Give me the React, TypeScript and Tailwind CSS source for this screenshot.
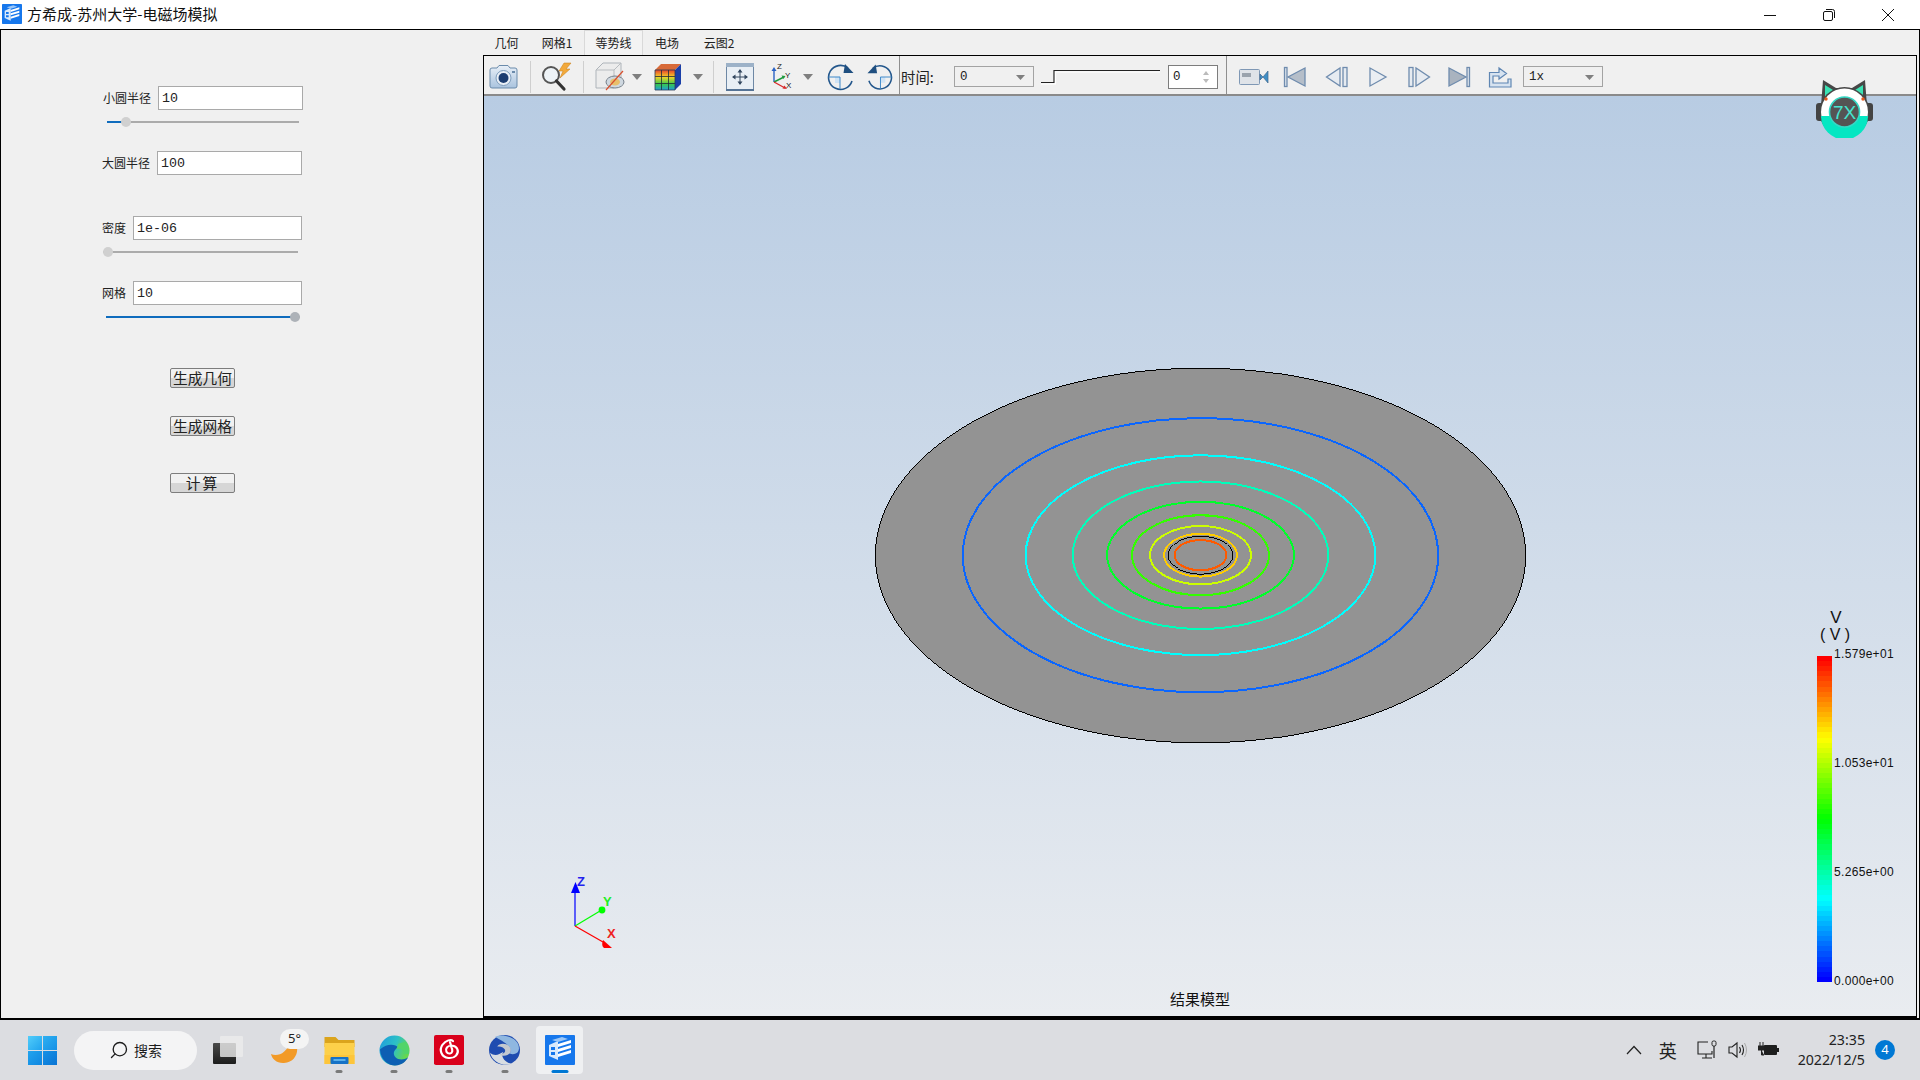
import React from "react";
import { Search } from "lucide-react";

const CJK = "font-['Noto_Sans_CJK_SC','Noto_Sans',sans-serif]";

function AppIcon({ size }: { size: number }) {
  return (
    <svg width={size} height={size} viewBox="0 0 30 30">
      <rect width="30" height="30" fill="#1677ec" rx="1" />
      <path d="M4 10 L13 6 L13 25 L4 21Z" fill="#d9eafc" />
      <path d="M13 9 L26 5 L26 8 L13 12Z M13 14 L26 10 L26 13 L13 17Z M13 19 L26 15 L26 18 L13 22Z" fill="#fff" />
      <path d="M7 5 L17 2 L23 4 L13 7Z" fill="#9cc7f7" />
      <path d="M6 12h4v3H6zM6 17h4v3H6z" fill="#1677ec" />
    </svg>
  );
}

function Arrow() {
  return (
    <svg width="10" height="6" viewBox="0 0 10 6">
      <path d="M0 0H10L5 6Z" fill="#7f7f7f" />
    </svg>
  );
}

function Sep() {
  return <div className="w-px h-[32px] bg-[#cfcfcf]" />;
}

function Field({ label, value, ml, inputW, gap }: { label: string; value: string; ml: number; inputW: string; gap: string }) {
  return (
    <div className="flex items-center h-[24px]" style={{ marginLeft: ml }}>
      <span className={`${CJK} text-[12px] text-[#222] whitespace-nowrap`}>{label}</span>
      <div className={`${inputW} ${gap} h-[24px] bg-white border-[1.5px] border-[#a9a9a9] flex items-center pl-[3px] pt-[1px] font-['Liberation_Mono',monospace] text-[13.3px] text-[#222]`}>{value}</div>
    </div>
  );
}

function Slider({ ml, w, fill, thumb, thumbColor }: { ml: number; w: number; fill: number; thumb: number; thumbColor: string }) {
  return (
    <div className="relative h-[10px] mt-[7px]" style={{ marginLeft: ml, width: w }}>
      <div className="absolute left-0 right-0 top-[4px] h-[2px] bg-[#ababab]" />
      <div className="absolute left-0 top-[4px] h-[2px] bg-[#0f6cbd]" style={{ width: fill }} />
      <div className="absolute top-0 w-[10px] h-[10px] rounded-full" style={{ left: thumb - 5, background: thumbColor }} />
    </div>
  );
}

function Btn({ label, mt, wide }: { label: string; mt: string; wide?: boolean }) {
  return (
    <button className={`${mt} ml-[169px] w-[65px] h-[20px] border border-[#7d7d7d] rounded-[2px] bg-[linear-gradient(#f1f1f1_50%,#d6d6d6_50%)] ${CJK} text-[14.7px] leading-[18px] text-[#222] flex items-center justify-center ${wide ? "" : "tracking-[2px]"}`}>{label}</button>
  );
}

function Tab({ w, label, active }: { w: string; label: string; active?: boolean }) {
  return (
    <div className={`${w} h-[25px] flex items-center justify-center ${CJK} text-[12px] text-[#222] ${active ? "border border-b-0 border-[#d9d9d9] bg-[#f3f3f3]" : ""}`}>{label}</div>
  );
}

function Camera() {
  return (
    <svg width="30" height="26" viewBox="0 0 30 26">
      <defs>
        <linearGradient id="camg" x1="0" y1="0" x2="0" y2="1">
          <stop offset="0" stopColor="#e8eff7" />
          <stop offset="1" stopColor="#a9c3de" />
        </linearGradient>
      </defs>
      <path d="M1 6 Q1 4 3 4 H8 L10 1.5 H19 L21 4 H26 Q28 4 28 6 V22 Q28 24 26 24 H3 Q1 24 1 22Z" fill="url(#camg)" stroke="#6b8bab" />
      <circle cx="14.5" cy="14" r="7.5" fill="#e9eff6" stroke="#7e9dbc" />
      <circle cx="14.5" cy="14" r="5" fill="#1c3d70" />
      <rect x="23" y="7" width="3" height="2" fill="#6b8bab" />
    </svg>
  );
}

function Magnifier() {
  return (
    <svg width="32" height="30" viewBox="0 0 32 30">
      <path d="M23 1 L18 9 L22 9 L19 16 L29 7 L25 7 L30 1Z" fill="#f2a93b" stroke="#c77c15" strokeWidth="0.5" />
      <circle cx="10" cy="13" r="8" fill="#eef3f7" stroke="#555" strokeWidth="2" />
      <path d="M15.5 19 L23 27" stroke="#333" strokeWidth="3.2" strokeLinecap="round" />
    </svg>
  );
}

function CubeHide() {
  return (
    <svg width="32" height="30" viewBox="0 0 32 30">
      <path d="M2 8 L9 1 H27 V18 L20 26 H2Z" fill="#ececec" stroke="#aeb4ba" />
      <path d="M2 8 H20 V26 M20 8 L27 1" fill="none" stroke="#b8bcc0" />
      <ellipse cx="21" cy="20" rx="9" ry="6" fill="#cfd8e0" stroke="#77818c" />
      <ellipse cx="21" cy="20" rx="5" ry="3.5" fill="#e8bf6c" />
      <path d="M12 28 L29 9" stroke="#d8502e" strokeWidth="1.2" />
    </svg>
  );
}

function ColorCube() {
  return (
    <svg width="28" height="28" viewBox="0 0 28 28">
      <defs>
        <linearGradient id="ccg" x1="0" y1="0" x2="0" y2="1">
          <stop offset="0" stopColor="#e8402a" />
          <stop offset="0.35" stopColor="#f4d32a" />
          <stop offset="0.7" stopColor="#37c94a" />
          <stop offset="1" stopColor="#1f9bd8" />
        </linearGradient>
      </defs>
      <path d="M1 7 L7 1 H27 L21 7Z" fill="#d86a38" />
      <path d="M21 7 L27 1 V21 L21 27Z" fill="#1a3fa8" />
      <rect x="1" y="7" width="20" height="20" fill="url(#ccg)" />
      <path d="M7.5 7V27M14.5 7V27M1 13.5H21M1 20.5H21" stroke="#1e2a3a" strokeWidth="0.8" />
      <path d="M1 7H21V27H1Z" fill="none" stroke="#2a3a55" strokeWidth="0.8" />
    </svg>
  );
}

function FitBox() {
  return (
    <svg width="28" height="28" viewBox="0 0 28 28">
      <rect x="0.5" y="0.5" width="27" height="27" fill="#e9eff5" stroke="#6e88a5" />
      <rect x="0" y="0" width="28" height="4" fill="#9db2c8" />
      <rect x="0" y="26" width="28" height="2" fill="#557395" />
      <path d="M14 7 V21 M7 14 H21" stroke="#33475f" strokeWidth="1" />
      <path d="M14 6 L11.5 9.5 H16.5Z M14 22 L11.5 18.5 H16.5Z M6 14 L9.5 11.5 V16.5Z M22 14 L18.5 11.5 V16.5Z" fill="#33475f" />
    </svg>
  );
}

function AxesIcon() {
  return (
    <svg width="24" height="30" viewBox="0 0 24 30">
      <path d="M4 20 V7" stroke="#2a62c4" strokeWidth="1.4" />
      <path d="M4 5 L1.5 9 H6.5Z" fill="#2a62c4" />
      <path d="M4 20 L14 15" stroke="#1e9a3e" strokeWidth="1.4" />
      <path d="M15.5 14 L11.5 13.5 L13.5 17Z" fill="#1e9a3e" />
      <path d="M4 20 L15 26" stroke="#d92b2b" strokeWidth="1.4" />
      <path d="M17 27 L12.5 26.5 L14.5 23.5Z" fill="#d92b2b" />
      <text x="7" y="7" fontSize="8" fontFamily="'Liberation Sans'" fill="#222">Z</text>
      <text x="15" y="16" fontSize="8" fontFamily="'Liberation Sans'" fill="#222">Y</text>
      <text x="16" y="26" fontSize="8" fontFamily="'Liberation Sans'" fill="#222">X</text>
    </svg>
  );
}

function Rotate({ flip }: { flip?: boolean }) {
  return (
    <svg width="27" height="28" viewBox="0 0 27 28" className={flip ? "-scale-x-100" : ""}>
      <path d="M21 5 A12 12 0 1 0 25 18" fill="none" stroke="#23578c" strokeWidth="1.6" />
      <path d="M18 1 L26.5 10 L16.5 10Z" fill="#1f4f80" />
      <path d="M8 14 H13 V20 H8Z" fill="#cfe3f5" />
      <path d="M1.5 14 H13 V26" fill="none" stroke="#3d88c9" strokeWidth="1" />
    </svg>
  );
}

const playFill = "#c3cfdd";
const playStroke = "#6f8cae";

function VideoCam() {
  return (
    <svg width="30" height="18" viewBox="0 0 30 18">
      <rect x="0.5" y="1.5" width="20" height="15" rx="1" fill="#dfe3e8" stroke="#7f98b5" />
      <rect x="3" y="5" width="9" height="4" fill="#9aa3ad" />
      <path d="M21 6 L24 9 L29 3 V15 L24 9 L21 12Z" fill="#3f8fc6" stroke="#44688c" strokeWidth="0.7" />
    </svg>
  );
}

function PlayIcon({ kind }: { kind: "first" | "prev" | "play" | "next" | "last" }) {
  return (
    <svg width="24" height="22" viewBox="0 0 24 22">
      {kind === "first" && (
        <g stroke={playStroke} fill={playFill} strokeWidth="1.3">
          <rect x="1.5" y="1.5" width="2.5" height="19" fill="#dfe6ee" />
          <path d="M22 2 V20 L5 11Z" fill="#b5bec9" />
        </g>
      )}
      {kind === "prev" && (
        <g stroke={playStroke} fill="#e6ebf1" strokeWidth="1.3">
          <path d="M15 2 V20 L1.5 11Z" />
          <rect x="18" y="1.5" width="4" height="19" />
        </g>
      )}
      {kind === "play" && <path d="M4 2 V20 L20 11Z" stroke={playStroke} strokeWidth="1.3" fill="#eaeef3" />}
      {kind === "next" && (
        <g stroke={playStroke} fill="#e6ebf1" strokeWidth="1.3">
          <rect x="2" y="1.5" width="4" height="19" />
          <path d="M9 2 V20 L22.5 11Z" />
        </g>
      )}
      {kind === "last" && (
        <g stroke={playStroke} fill={playFill} strokeWidth="1.3">
          <path d="M2 2 V20 L19 11Z" fill="#a9b3bf" />
          <rect x="20" y="1.5" width="2.5" height="19" fill="#dfe6ee" />
        </g>
      )}
    </svg>
  );
}

function LoopIcon() {
  return (
    <svg width="24" height="22" viewBox="0 0 24 22">
      <path d="M1.5 21 V6.5 H11 V2 L18.5 7.5 L11 13 V10 H5 V17 H20 V13 H23 V21Z" fill="#d7e3f0" stroke="#5f86b3" strokeWidth="1.2" />
    </svg>
  );
}

function Combo({ value, w }: { value: string; w: string }) {
  return (
    <div className={`${w} h-[21px] border border-[#a3a3a3] bg-[#f0f0f0] flex items-center justify-between pl-[5px] pr-[8px] pt-[1px] font-['Liberation_Mono',monospace] text-[12.5px] text-[#222]`}>
      <span>{value}</span>
      <svg width="9" height="5" viewBox="0 0 9 5"><path d="M0 0H9L4.5 5Z" fill="#7f7f7f" /></svg>
    </div>
  );
}

function Cell({ w, children }: { w: string; children: React.ReactNode }) {
  return <div className={`${w} shrink-0 h-full flex items-center justify-center`}>{children}</div>;
}

function Toolbar() {
  return (
    <div className="h-[40px] bg-[#f0f0f0] border-b-2 border-[#8a8a8a] flex items-stretch relative">
      <div className="flex items-center pt-[3px] shrink-0">
        <Cell w="w-[40px]"><Camera /></Cell>
        <Cell w="w-[12px]"><Sep /></Cell>
        <Cell w="w-[42px]"><Magnifier /></Cell>
        <Cell w="w-[10px]"><Sep /></Cell>
        <Cell w="w-[44px]"><CubeHide /></Cell>
        <Cell w="w-[10px]"><Arrow /></Cell>
        <Cell w="w-[51px]"><ColorCube /></Cell>
        <Cell w="w-[10px]"><Arrow /></Cell>
        <Cell w="w-[21px]"><Sep /></Cell>
        <Cell w="w-[32px]"><FitBox /></Cell>
        <Cell w="w-[52px]"><AxesIcon /></Cell>
        <div className="-ml-[5px]"><Cell w="w-[10px]"><Arrow /></Cell></div>
        <Cell w="w-[54px]"><Rotate /></Cell>
        <Cell w="w-[26px]"><Rotate flip /></Cell>
        <div className="w-[6px] shrink-0" />
      </div>
      <div className="w-px bg-[#8f8f8f] shrink-0" />
      <div className="flex items-center pt-[3px] shrink-0">
        <span className={`${CJK} ml-[1px] w-[53px] shrink-0 text-[14.4px] text-[#222]`}>时间:</span>
        <Combo value="0" w="w-[80px]" />
        <svg width="119" height="16" viewBox="0 0 119 16" className="ml-[7px] shrink-0">
          <path d="M0 13.5 H13 V1.5 H119" fill="none" stroke="#222" strokeWidth="1.2" />
          <path d="M0 15 H14.5 V3 H119" fill="none" stroke="#ffffff" strokeWidth="1.2" />
        </svg>
        <div className="ml-[8px] w-[50px] h-[24px] border border-[#7d7d7d] bg-white flex items-center justify-between pl-[4px] pr-[8px] pt-[1px] font-['Liberation_Mono',monospace] text-[12.5px] text-[#222] shrink-0">
          <span>0</span>
          <svg width="6" height="12" viewBox="0 0 6 12"><path d="M0 4 L3 0 L6 4Z M0 8 L6 8 L3 12Z" fill="#bbb" /></svg>
        </div>
        <div className="w-[8px] shrink-0" />
      </div>
      <div className="w-px bg-[#8f8f8f] shrink-0" />
      <div className="flex items-center pt-[3px] shrink-0">
        <div className="w-[8px] shrink-0" />
        <Cell w="w-[38px]"><VideoCam /></Cell>
        <Cell w="w-[44px]"><PlayIcon kind="first" /></Cell>
        <Cell w="w-[40px]"><PlayIcon kind="prev" /></Cell>
        <Cell w="w-[42px]"><PlayIcon kind="play" /></Cell>
        <Cell w="w-[39px]"><PlayIcon kind="next" /></Cell>
        <Cell w="w-[41px]"><PlayIcon kind="last" /></Cell>
        <Cell w="w-[42px]"><LoopIcon /></Cell>
        <div className="ml-[2px]"><Combo value="1x" w="w-[80px]" /></div>
      </div>
    </div>
  );
}

const rings: [number, number, string, number][] = [
  [238, 137.2, "#0a66ff", 2],
  [175, 100, "#00ffff", 2],
  [128, 73.8, "#00ffbb", 2],
  [93.5, 53.4, "#00ff2a", 2],
  [68.5, 40, "#33ff00", 2],
  [50.5, 29.2, "#ccff00", 2],
  [36.5, 21.4, "#ffcc00", 2],
  [32.5, 19, "#000000", 1],
  [26, 15.1, "#ff5a00", 2],
];

function Model() {
  return (
    <svg className="absolute inset-0 w-full h-full" viewBox="484 96 1432 921" shapeRendering="crispEdges">
      <ellipse cx="1200.5" cy="556" rx="325.5" ry="187.5" fill="#939393" stroke="#000" strokeWidth="1" />
      {rings.map(([rx, ry, c, sw], i) => (
        <ellipse key={i} cx="1200.5" cy="555.7" rx={rx} ry={ry} fill="none" stroke={c} strokeWidth={sw} />
      ))}
    </svg>
  );
}

function Axes() {
  return (
    <svg className="absolute left-[76px] top-[774px]" width="60" height="90" viewBox="560 870 60 90">
      <path d="M575 926 V890" stroke="#0000ff" strokeWidth="1.2" />
      <path d="M575.5 882 L571 893 H580Z" fill="#0000ff" />
      <path d="M575 926 L600 911" stroke="#00ff00" strokeWidth="1.2" />
      <circle cx="602" cy="910" r="3.4" fill="#00ff00" />
      <path d="M575 926 L603 942" stroke="#ff0000" strokeWidth="1.2" />
      <path d="M603 940 L612 948 H604 Q601 946 603 940Z" fill="#ff0000" />
      <text x="577" y="886" fontSize="13" fontWeight="700" fontFamily="'Liberation Sans'" fill="#2222ee">Z</text>
      <text x="603" y="906" fontSize="13" fontWeight="700" fontFamily="'Liberation Sans'" fill="#22ee22">Y</text>
      <text x="607" y="938" fontSize="13" fontWeight="700" fontFamily="'Liberation Sans'" fill="#ee2222">X</text>
    </svg>
  );
}

function lerp(a: number[], b: number[], t: number) {
  return a.map((v, i) => Math.round(v + (b[i] - v) * t));
}

const stops = [[255, 0, 0], [255, 255, 0], [0, 255, 0], [0, 255, 255], [0, 0, 255]];
const bands = Array.from({ length: 64 }, (_, i) => {
  const p = (i / 63) * 4;
  const k = Math.min(3, Math.floor(p));
  const c = lerp(stops[k], stops[k + 1], p - k);
  return `rgb(${c[0]},${c[1]},${c[2]})`;
});

function Legend() {
  return (
    <div className="absolute left-[1333px] top-[510px] w-[80px] font-['Liberation_Sans',sans-serif] text-[#111]">
      <div className="relative h-[376px]">
        <div className="absolute left-[9px] top-[3px] w-[20px] text-center text-[17px] leading-[18px]">V</div>
        <div className="absolute left-[-2px] top-[20px] w-[40px] text-center text-[16px] leading-[18px] whitespace-nowrap">( V )</div>
        <div className="absolute left-[0px] top-[50px] w-[15px] h-[326px] flex flex-col">
          {bands.map((c, i) => (
            <div key={i} className="flex-1" style={{ background: c }} />
          ))}
        </div>
        {[["1.579e+01", 42], ["1.053e+01", 151], ["5.265e+00", 260], ["0.000e+00", 369]].map(([t, y]) => (
          <div key={t} className="absolute left-[17px] text-[12px] leading-[12px] tracking-[0.32px] whitespace-nowrap" style={{ top: y as number }}>{t}</div>
        ))}
      </div>
    </div>
  );
}

function CatLogo() {
  return (
    <svg className="absolute left-[1331px] top-[-18px]" width="60" height="60" viewBox="0 0 60 60">
      <path d="M8 2 L21 10 H37 L50 2 L52 28 H6Z" fill="#474747" />
      <path d="M10 7 L18 12 L10 21Z M48 7 L40 12 L48 21Z" fill="#3be3b4" />
      <rect x="1" y="25" width="9" height="18" rx="3" fill="#444" />
      <rect x="49" y="25" width="9" height="18" rx="3" fill="#444" />
      <rect x="7" y="26" width="2" height="15" fill="#e8591e" />
      <rect x="50" y="26" width="2" height="15" fill="#e8591e" />
      <circle cx="29.5" cy="34" r="25" fill="#474747" />
      <circle cx="29.5" cy="34" r="23.5" fill="#ffffff" />
      <path d="M6 38 A23.5 23.5 0 0 0 53 38Z" fill="#05e6c2" />
      <circle cx="29.5" cy="34" r="15" fill="#545454" stroke="#34d8c4" strokeWidth="1.6" />
      <circle cx="11" cy="21" r="1.7" fill="#e8591e" />
      <circle cx="48" cy="21" r="1.7" fill="#e8591e" />
      <text x="29.5" y="41" textAnchor="middle" fontSize="19" fontFamily="'Liberation Sans'" fill="#47e5d0">7X</text>
    </svg>
  );
}

function WinLogo() {
  return (
    <div className="grid grid-cols-2 gap-[1px] w-[29px] h-[29px]">
      <div className="bg-[linear-gradient(135deg,#52cdfa,#1fa3ee)]" />
      <div className="bg-[linear-gradient(135deg,#2eb0f1,#1590e6)]" />
      <div className="bg-[linear-gradient(135deg,#22a4ee,#0f86e0)]" />
      <div className="bg-[linear-gradient(135deg,#1591e6,#0a74d4)]" />
    </div>
  );
}

function TaskCell({ w, children, dot }: { w: string; children: React.ReactNode; dot?: boolean }) {
  return (
    <div className={`${w} shrink-0 h-full flex items-center justify-center relative`}>
      {children}
      {dot && <div className="absolute left-1/2 -translate-x-1/2 top-[50px] w-[7px] h-[3px] rounded-full bg-[#7a7a7a]" />}
    </div>
  );
}

function Taskbar() {
  return (
    <div className="h-[60px] bg-[#dcdde1] flex items-stretch relative pl-[22px]">
      <TaskCell w="w-[40px]"><WinLogo /></TaskCell>
      <div className="self-center ml-[12px] w-[123px] h-[39px] rounded-full bg-[#f4f4f5] flex items-center justify-center gap-[5px] shrink-0">
        <Search size={20} strokeWidth={1.6} className="-scale-x-100 text-[#1c1c1c]" />
        <span className={`${CJK} text-[14px] text-[#1c1c1c]`}>搜索</span>
      </div>
      <TaskCell w="w-[62px]">
        <div className="relative w-[30px] h-[28px]">
          <div className="absolute left-0 bottom-0 w-[23px] h-[21px] bg-[linear-gradient(#4a4a4a,#1c1c1c)] rounded-[1px]" />
          <div className="absolute right-0 top-0 w-[23px] h-[21px] bg-[#ececec]/80 rounded-[1px]" />
        </div>
      </TaskCell>
      <TaskCell w="w-[52px]">
        <svg width="27" height="24" viewBox="0 0 27 24" className="absolute left-[12px] top-[20px]">
          <path d="M0 14 C6 17 16 14 20 0 C30 3 28 22 13 23 C6 23.5 1 19 0 14Z" fill="#f29a27" />
        </svg>
        <div className="absolute left-[21px] top-[9px] w-[29px] h-[20px] rounded-full bg-[#f4f4f4] flex items-center justify-center font-['Noto_Sans',sans-serif] text-[13px] text-[#222]">5°</div>
      </TaskCell>
      <TaskCell w="w-[56px]" dot>
        <svg width="31" height="27" viewBox="0 0 30 27">
          <path d="M0 0 H11 L14 3 H30 V10 H0Z" fill="#dba41d" />
          <rect x="0" y="6" width="30" height="21" fill="#fdd04a" />
          <rect x="0" y="18" width="30" height="9" fill="#fdc53b" />
          <rect x="6" y="20" width="18" height="7" rx="1" fill="#1672c6" />
          <rect x="9" y="22" width="12" height="2" fill="#5bb0ea" />
        </svg>
      </TaskCell>
      <TaskCell w="w-[54px]" dot>
        <svg width="31" height="31" viewBox="0 0 32 32">
          <defs>
            <linearGradient id="edge1" x1="0" y1="0" x2="1" y2="0.4">
              <stop offset="0" stopColor="#1e9adf" />
              <stop offset="0.55" stopColor="#2cc0c7" />
              <stop offset="1" stopColor="#67d84c" />
            </linearGradient>
          </defs>
          <circle cx="16" cy="16" r="15.5" fill="url(#edge1)" />
          <path d="M1 15 C2 28 12 32 17 31.5 C24 31 28 27 30 23 C26 26 20 26 17 23 C14 20 15 15 20 13 C18 10 12 9 7 11 C4 12 2 14 1 15Z" fill="#0d5fb3" />
          <path d="M18 14.5 C23 13 26 16 25.5 19.5 L31 19.5 C31.5 16 30.5 10 27 7 L20 9Z" fill="#52d46a" />
        </svg>
      </TaskCell>
      <TaskCell w="w-[56px]" dot>
        <svg width="30" height="30" viewBox="0 0 30 34" preserveAspectRatio="none">
          <rect width="30" height="34" rx="2" fill="#d9001b" />
          <path d="M19 7 C17 4.5 12 6 8.5 11 C5 16.5 7 25 14.5 26 C21 26.8 25 21 23.5 16.5 C22 12 16 10.5 13 14 C10.5 17.5 13 21.5 16 21 C18.5 20.5 19 17.5 17.5 14 L16 8" fill="none" stroke="#fff" strokeWidth="2.2" strokeLinecap="round" />
        </svg>
      </TaskCell>
      <TaskCell w="w-[55px]" dot>
        <svg width="31" height="30" viewBox="0 0 30 34" preserveAspectRatio="none">
          <ellipse cx="15" cy="17" rx="15" ry="17" fill="#1f4cb0" />
          <path d="M6 2 C14 -2 29 3 29 15 C29 21 24 23 20 21 C24 13 14 8 6 2Z" fill="#8fb7e0" />
          <path d="M1 20 C3 30 13 36 22 33 C14 30 11 23 14 19 C9 23 5 24 1 20Z" fill="#d8dde2" />
          <path d="M8 13 C10 8 20 9 21 16 C22 22 15 26 10 22 C14 22 17 19 15 16 C13 13 10 13 8 13Z" fill="#c3c8cf" />
        </svg>
      </TaskCell>
      <div className="ml-[4px] self-center w-[47px] h-[48px] bg-[#eff0f2] rounded-[4px] flex items-center justify-center relative shrink-0">
        <AppIcon size={30} />
        <div className="absolute left-1/2 -translate-x-1/2 bottom-[1px] w-[17px] h-[3px] rounded-full bg-[#0078d4]" />
      </div>
      <div className="ml-auto flex items-center h-full pr-[25px]">
        <svg width="16" height="10" viewBox="0 0 16 10" className="mr-[17px]"><path d="M1 9 L8 1.5 L15 9" fill="none" stroke="#222" strokeWidth="1.2" /></svg>
        <span className={`${CJK} text-[18px] text-[#222] w-[20px] mr-[18px]`}>英</span>
        <svg width="20" height="20" viewBox="0 0 20 20" className="mr-[11px]">
          <path d="M11 2 H1 V14 H15 V11 M5 18 H15 M9 14 V18" fill="none" stroke="#222" strokeWidth="1.1" />
          <rect x="15" y="1" width="4" height="5" rx="1.5" fill="none" stroke="#222" />
          <path d="M17 6 V18" stroke="#222" strokeWidth="1.2" />
        </svg>
        <svg width="20" height="18" viewBox="0 0 20 18" className="mr-[10px]">
          <path d="M1 6 H4 L9 2 V16 L4 12 H1Z" fill="none" stroke="#222" strokeWidth="1.1" />
          <path d="M11.5 6 Q13.5 9 11.5 12 M14 4 Q17 9 14 14" fill="none" stroke="#222" strokeWidth="1.1" />
          <path d="M16.5 2 Q20.5 9 16.5 16" fill="none" stroke="#aaa" strokeWidth="1" />
        </svg>
        <svg width="21" height="16" viewBox="0 0 21 16" className="mr-[19px]">
          <path d="M2 0 V4 M5 0 V4 M0 4 H7 V8 H0Z M3.5 8 V13 H6" fill="#222" stroke="#222" />
          <rect x="6" y="3" width="13" height="10" rx="1" fill="#1e1e1e" />
          <rect x="19" y="6" width="2" height="4" fill="#1e1e1e" />
        </svg>
        <div className="flex flex-col items-end font-['Noto_Sans',sans-serif] text-[14.2px] leading-[20px] text-[#222] mr-[10px]">
          <span>23:35</span>
          <span>2022/12/5</span>
        </div>
        <div className="w-[20px] h-[20px] rounded-full bg-[#0078d4] text-white text-[13px] font-['Noto_Sans',sans-serif] flex items-center justify-center">4</div>
      </div>
    </div>
  );
}

export default function App() {
  return (
    <div className="w-[1920px] h-[1080px] overflow-hidden flex flex-col bg-[#f0f0f0]">
      <div className="h-[29px] bg-white flex items-center shrink-0">
        <div className="ml-[2px] mt-[-1px]"><AppIcon size={20} /></div>
        <span className={`${CJK} ml-[5px] text-[15px] text-[#111] whitespace-nowrap`}>方希成-苏州大学-电磁场模拟</span>
        <div className="ml-auto flex items-center h-full">
          <svg width="14" height="14" viewBox="0 0 14 14" className="mr-[45px]"><path d="M1 7.5 H13" stroke="#111" /></svg>
          <svg width="14" height="14" viewBox="0 0 14 14" className="mr-[45px]">
            <rect x="1.5" y="3.5" width="9" height="9" rx="1.5" fill="none" stroke="#111" />
            <path d="M4 1.5 H10.5 A2 2 0 0 1 12.5 3.5 V10" fill="none" stroke="#111" />
          </svg>
          <svg width="14" height="14" viewBox="0 0 14 14" className="mr-[25px]"><path d="M1 1 L13 13 M13 1 L1 13" stroke="#111" strokeWidth="1" /></svg>
        </div>
      </div>
      <div className="h-[991px] shrink-0 flex border border-black border-l-[1.5px] border-b-2">
        <div className="w-[482px] shrink-0 bg-[#f0f0f0] flex flex-col">
          <div className="h-[56px] shrink-0" />
          <Field label="小圆半径" value="10" ml={102} inputW="w-[145px]" gap="ml-[7px]" />
          <Slider ml={106} w={192} fill={15} thumb={19} thumbColor="#d0d0d0" />
          <div className="h-[24px] shrink-0" />
          <Field label="大圆半径" value="100" ml={101} inputW="w-[145px]" gap="ml-[7px]" />
          <div className="h-[41px] shrink-0" />
          <Field label="密度" value="1e-06" ml={101} inputW="w-[169px]" gap="ml-[7px]" />
          <Slider ml={102} w={195} fill={0} thumb={5} thumbColor="#d0d0d0" />
          <div className="h-[24px] shrink-0" />
          <Field label="网格" value="10" ml={101} inputW="w-[169px]" gap="ml-[7px]" />
          <Slider ml={105} w={194} fill={189} thumb={189} thumbColor="#adb2b8" />
          <Btn label="生成几何" mt="mt-[46px]" wide />
          <Btn label="生成网格" mt="mt-[28px]" wide />
          <Btn label="计算" mt="mt-[37px]" />
        </div>
        <div className="flex-1 flex flex-col min-w-0 mr-[2px]">
          <div className="h-[25px] flex shrink-0 items-end">
            <Tab w="w-[47px]" label="几何" />
            <Tab w="w-[54px]" label="网格1" />
            <Tab w="w-[59px]" label="等势线" active />
            <Tab w="w-[48px]" label="电场" />
            <Tab w="w-[56px]" label="云图2" />
          </div>
          <div className="flex-1 flex flex-col border border-black border-b-2 min-h-0">
            <Toolbar />
            <div className="flex-1 relative bg-[linear-gradient(#b8cce3,#e9ecf0)]">
              <Model />
              <Axes />
              <CatLogo />
              <Legend />
              <div className={`absolute left-0 right-0 top-[892px] text-center ${CJK} text-[15px] text-[#111]`}>结果模型</div>
            </div>
          </div>
        </div>
      </div>
      <Taskbar />
    </div>
  );
}
